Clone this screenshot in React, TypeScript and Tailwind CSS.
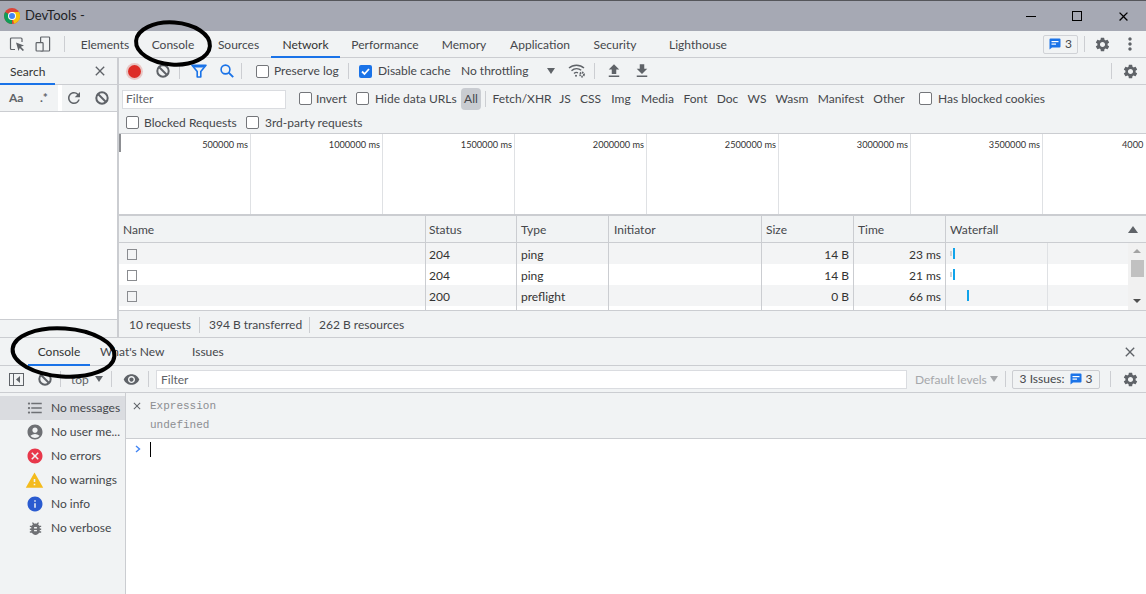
import {
  MdSettings,
  MdMoreVert,
  MdVisibility,
  MdAccountCircle,
  MdCancel,
  MdWarning,
  MdInfo,
  MdBugReport,
  MdFormatListBulleted,
  MdClose,
  MdRefresh,
  MdFileUpload,
  MdFileDownload,
} from "react-icons/md";

const MAIN_TABS = [
  { label: "Elements", w: "w-[70px]" },
  { label: "Console", w: "w-[66px]" },
  { label: "Sources", w: "w-[65px]" },
  { label: "Network", w: "w-[69px]" },
  { label: "Performance", w: "w-[90px]" },
  { label: "Memory", w: "w-[68px]" },
  { label: "Application", w: "w-[84px]" },
  { label: "Security", w: "w-[66px]" },
  { label: "Lighthouse", w: "w-[100px]" },
];

const TYPE_FILTERS = [
  { label: "Fetch/XHR", w: "w-[66px]" },
  { label: "JS", w: "w-[20px]" },
  { label: "CSS", w: "w-[31px]" },
  { label: "Img", w: "w-[30px]" },
  { label: "Media", w: "w-[43px]" },
  { label: "Font", w: "w-[33px]" },
  { label: "Doc", w: "w-[31px]" },
  { label: "WS", w: "w-[28px]" },
  { label: "Wasm", w: "w-[42px]" },
  { label: "Manifest", w: "w-[56px]" },
  { label: "Other", w: "w-[40px]" },
];

const TICKS = ["500000 ms", "1000000 ms", "1500000 ms", "2000000 ms", "2500000 ms", "3000000 ms", "3500000 ms"];

const ROWS = [
  { status: "204", type: "ping", size: "14 B", time: "23 ms", bar: "pl-[4px]", gray: true, wait: true },
  { status: "204", type: "ping", size: "14 B", time: "21 ms", bar: "pl-[4px]", gray: false, wait: true },
  { status: "200", type: "preflight", size: "0 B", time: "66 ms", bar: "pl-[21px]", gray: true, wait: false },
];

const LEVELS = [
  { label: "No messages", icon: <MdFormatListBulleted className="text-[#6e7074]" size={18} />, active: true },
  { label: "No user me...", icon: <MdAccountCircle className="text-[#6e7074]" size={18} /> },
  { label: "No errors", icon: <MdCancel className="text-[#e8374a]" size={18} /> },
  { label: "No warnings", icon: <MdWarning className="text-[#f4bb1c]" size={19} /> },
  { label: "No info", icon: <MdInfo className="text-[#2a5bd0]" size={18} /> },
  { label: "No verbose", icon: <MdBugReport className="text-[#6e7074]" size={17} /> },
];

function ChromeLogo() {
  return (
    <svg width="16" height="16" viewBox="0 0 16 16">
      <circle cx="8" cy="8" r="8" fill="#db4437" />
      <path d="M8 8 L1.1 4 A8 8 0 0 0 8 16 Z" fill="#0f9d58" />
      <path d="M8 8 V4 H15 A8 8 0 0 1 10 15.8 Z" fill="#f4c20d" />
      <circle cx="8" cy="8" r="4" fill="#fff" />
      <circle cx="8" cy="8" r="3" fill="#4285f4" />
    </svg>
  );
}

function Divider({ className = "" }: { className?: string }) {
  return <div className={`w-px h-[16px] bg-[#ccced2] shrink-0 ${className}`} />;
}

function CheckBox({ checked = false, className = "" }: { checked?: boolean; className?: string }) {
  if (checked) {
    return (
      <div className={`w-[13px] h-[13px] rounded-[2px] bg-[#1a73e8] flex items-center justify-center shrink-0 ${className}`}>
        <svg width="11" height="11" viewBox="0 0 11 11">
          <path d="M2 5.5 L4.5 8 L9 3" fill="none" stroke="#fff" strokeWidth="1.8" />
        </svg>
      </div>
    );
  }
  return <div className={`w-[13px] h-[13px] rounded-[2px] border border-[#74767a] bg-white shrink-0 ${className}`} />;
}

function BlockIcon({ className = "" }: { className?: string }) {
  return (
    <svg className={`shrink-0 ${className}`} width="14" height="14" viewBox="0 0 14 14" fill="none" stroke="#5f6368" strokeWidth="2">
      <circle cx="7" cy="7" r="5.7" />
      <path d="M3 3 L11 11" />
    </svg>
  );
}

function IssueIcon() {
  return (
    <svg width="12" height="12" viewBox="0 0 12 12">
      <path d="M1.5 0.5 H10.5 A1 1 0 0 1 11.5 1.5 V8.5 A1 1 0 0 1 10.5 9.5 H3 L0.5 11.5 V1.5 A1 1 0 0 1 1.5 0.5 Z" fill="#1a73e8" />
      <rect x="2.5" y="3" width="7" height="1.2" fill="#fff" />
      <rect x="2.5" y="5.5" width="4.5" height="1.2" fill="#fff" />
    </svg>
  );
}

function InspectIcon() {
  return (
    <svg width="16" height="16" viewBox="0 0 16 16" fill="none">
      <path d="M6 13.5 H2.5 A1 1 0 0 1 1.5 12.5 V3 A1 1 0 0 1 2.5 2 H12 A1 1 0 0 1 13 3 V6" stroke="#5f6368" strokeWidth="1.2" />
      <path d="M7 6.5 L15 9.5 L11.8 10.8 L15 14 L13.8 15 L10.8 12 L9.5 15 Z" fill="#5f6368" />
    </svg>
  );
}

function DeviceIcon() {
  return (
    <svg width="16" height="16" viewBox="0 0 16 16" fill="none" stroke="#5f6368" strokeWidth="1.2">
      <rect x="5.6" y="1" width="9" height="14" rx="0.8" />
      <rect x="1.1" y="6.6" width="7" height="8.4" rx="0.8" fill="#f1f3f4" />
    </svg>
  );
}

function FunnelIcon() {
  return (
    <svg width="16" height="14" viewBox="0 0 16 14" fill="none">
      <path d="M1 1.2 H15 L9.8 7.5 V13 H6.2 V7.5 Z" stroke="#1a73e8" strokeWidth="1.6" strokeLinejoin="round" />
      <path d="M1.5 1 H14.5 L12.5 3.5 H3.5 Z" fill="#1a73e8" />
    </svg>
  );
}

function SearchIcon() {
  return (
    <svg width="14" height="14" viewBox="0 0 14 14" fill="none" stroke="#1a73e8" strokeWidth="1.6">
      <circle cx="5.5" cy="5.5" r="4.4" />
      <path d="M8.7 8.7 L13.2 13.2" strokeWidth="1.9" />
    </svg>
  );
}

function WifiGearIcon() {
  return (
    <svg width="18" height="14" viewBox="0 0 18 14" fill="none" stroke="#5f6368" strokeWidth="1.4">
      <path d="M1 4 C5 0.3 12 0.3 16 4" />
      <path d="M3.5 6.8 C6.5 4.2 10.5 4.2 13.2 6.3" />
      <path d="M6 9.5 C7.2 8.4 8.8 8.2 10 8.8" />
      <circle cx="8" cy="11.8" r="1" fill="#5f6368" stroke="none" />
      <circle cx="14" cy="10.5" r="2" strokeWidth="1.8" strokeDasharray="1.4 0.7" />
    </svg>
  );
}

function SidebarToggleIcon() {
  return (
    <svg width="15" height="13" viewBox="0 0 15 13" fill="none">
      <rect x="0.5" y="0.5" width="14" height="12" stroke="#5f6368" />
      <path d="M4.5 0.5 V12.5" stroke="#5f6368" />
      <path d="M11 3 L7 6.5 L11 10 Z" fill="#5f6368" />
    </svg>
  );
}

function Ellipse({ className, w, h, rx, ry }: { className: string; w: number; h: number; rx: number; ry: number }) {
  return (
    <svg className={`absolute pointer-events-none ${className}`} width={w} height={h} viewBox={`0 0 ${w} ${h}`} fill="none">
      <ellipse cx={w / 2} cy={h / 2} rx={rx} ry={ry} stroke="#000" strokeWidth="4" transform={`rotate(4 ${w / 2} ${h / 2})`} />
    </svg>
  );
}

export default function App() {
  return (
    <div
      className="relative w-[1146px] h-[594px] overflow-hidden flex flex-col bg-white text-[#45474b] text-[12px] whitespace-nowrap"
      style={{ fontFamily: 'Lato, "Open Sans", sans-serif' }}
    >
      {/* Title bar */}
      <div className="h-[31px] shrink-0 border-t border-[#55565b] bg-[#a6a9b4] flex items-center pl-[4px] text-[#202124]">
        <ChromeLogo />
        <span className="ml-[5px] text-[13px]">DevTools -</span>
        <div className="ml-auto flex items-center">
          <div className="w-[46px] flex justify-center">
            <div className="w-[10px] h-px bg-black" />
          </div>
          <div className="w-[46px] flex justify-center">
            <div className="w-[10px] h-[10px] border border-black" />
          </div>
          <div className="w-[46px] flex justify-center">
            <MdClose className="text-black" size={15} />
          </div>
        </div>
      </div>

      {/* Main tabs */}
      <div className="h-[27px] shrink-0 bg-[#f1f3f4] border-b border-[#cbcdd1] flex items-stretch">
        <div className="flex items-center gap-[10px] pl-[9px] w-[64px]">
          <InspectIcon />
          <DeviceIcon />
        </div>
        <div className="self-center">
          <Divider />
        </div>
        <div className="w-[5px]" />
        {MAIN_TABS.map((t) => (
          <div
            key={t.label}
            className={`${t.w} flex items-center justify-center ${t.label === "Network" ? "border-b-2 border-[#1a73e8] text-[#333] -mb-px pt-[2px]" : "pt-px"}`}
          >
            {t.label}
          </div>
        ))}
        <div className="ml-auto flex items-center pr-[6px]">
          <div className="w-[35px] h-[19px] border border-[#d0d2d6] rounded-[2px] flex items-center justify-center gap-[4px] text-[12px]">
            <IssueIcon />
            3
          </div>
          <Divider className="ml-[6px]" />
          <MdSettings className="text-[#5f6368] ml-[9px]" size={17} />
          <MdMoreVert className="text-[#5f6368] ml-[9px]" size={20} />
        </div>
      </div>

      {/* Upper area */}
      <div className="h-[280px] shrink-0 flex border-b border-[#cbcdd1]">
        {/* Search sidebar */}
        <div className="w-[119px] shrink-0 border-r-2 border-[#cbcdd1] flex flex-col">
          <div className="h-[27px] shrink-0 bg-[#f1f3f4] border-b border-[#cbcdd1] flex items-stretch">
            <div className="w-[55px] border-b-2 border-[#1a73e8] -mb-px flex items-center pl-[10px] pt-[2px] text-[#333]">Search</div>
            <MdClose className="text-[#5f6368] ml-auto mr-[9px] self-center" size={16} />
          </div>
          <div className="h-[27px] shrink-0 bg-[#f1f3f4] border-b border-[#cbcdd1] flex items-center text-[#5f6368]">
            <span className="ml-[9px] font-bold w-[26px]">Aa</span>
            <span className="font-bold w-[23px] pl-[5px]">.*</span>
            <div className="w-[4px] h-[26px] bg-white" />
            <MdRefresh className="ml-[3px]" size={18} />
            <BlockIcon className="ml-[12px]" />
          </div>
          <div className="flex-1 bg-white" />
          <div className="h-[18px] shrink-0 bg-[#f1f3f4] border-t border-[#cbcdd1]" />
        </div>

        {/* Network panel */}
        <div className="flex-1 min-w-0 flex flex-col">
          <div className="h-[27px] shrink-0 bg-[#f1f3f4] border-b border-[#cbcdd1] flex items-center">
            <div className="ml-[9px] w-[13px] h-[13px] rounded-full bg-[#dd2c26] ring-2 ring-[#e8c6c4]" />
            <BlockIcon className="ml-[15px]" />
            <Divider className="ml-[9px]" />
            <div className="ml-[11px]">
              <FunnelIcon />
            </div>
            <div className="ml-[13px]">
              <SearchIcon />
            </div>
            <Divider className="ml-[7px]" />
            <CheckBox className="ml-[14px]" />
            <span className="ml-[5px] w-[66px]">Preserve log</span>
            <Divider className="ml-[8px]" />
            <CheckBox checked className="ml-[10px]" />
            <span className="ml-[6px] w-[71px]">Disable cache</span>
            <span className="ml-[12px] w-[68px]">No throttling</span>
            <div className="ml-[18px] w-0 h-0 border-x-[4px] border-x-transparent border-t-[6px] border-t-[#5f6368]" />
            <div className="ml-[13px]">
              <WifiGearIcon />
            </div>
            <Divider className="ml-[8px]" />
            <MdFileUpload className="ml-[10px] text-[#5f6368]" size={18} />
            <MdFileDownload className="ml-[10px] text-[#5f6368]" size={18} />
            <Divider className="ml-auto mr-[10px]" />
            <MdSettings className="text-[#5f6368] mr-[7px]" size={17} />
          </div>

          <div className="h-[49px] shrink-0 bg-[#f1f3f4] border-b border-[#cbcdd1] flex flex-col">
            <div className="h-[28px] flex items-center pl-[3px]">
              <div className="w-[164px] h-[19px] bg-white border border-[#dadce0] pl-[3px] flex items-center text-[#5f6368]">Filter</div>
              <CheckBox className="ml-[13px] -mt-[2px]" />
              <span className="ml-[4px] w-[31px] -mt-px">Invert</span>
              <CheckBox className="ml-[9px] -mt-[2px]" />
              <span className="ml-[6px] w-[80px] -mt-px">Hide data URLs</span>
              <div className="ml-[6px] w-[20px] h-[22px] rounded-[4px] bg-[#c9ccd1] flex items-center justify-center">All</div>
              <Divider className="ml-[4px]" />
              <div className="w-[3px]" />
              {TYPE_FILTERS.map((f) => (
                <span key={f.label} className={`${f.w} text-center`}>
                  {f.label}
                </span>
              ))}
              <CheckBox className="ml-[10px] -mt-[2px]" />
              <span className="ml-[6px] -mt-px">Has blocked cookies</span>
            </div>
            <div className="flex-1 flex items-center pl-[7px] pb-px">
              <CheckBox />
              <span className="ml-[5px] w-[93px]">Blocked Requests</span>
              <CheckBox className="ml-[9px]" />
              <span className="ml-[6px]">3rd-party requests</span>
            </div>
          </div>

          {/* Overview */}
          <div className="relative h-[82px] shrink-0 flex overflow-hidden border-b-2 border-[#cbcdd1] bg-white">
            <div className="absolute left-0 top-0 w-[2px] h-[18px] bg-[#8d8f93]" />
            {TICKS.map((t) => (
              <div key={t} className="w-[132px] shrink-0 border-r border-[#dfe1e4] text-right pr-[2px] text-[9.2px] leading-[21px] text-[#333]">
                {t}
              </div>
            ))}
            <div className="pl-[79px] text-[9.2px] leading-[21px] text-[#333]">4000</div>
          </div>

          {/* Table */}
          <div className="flex-1 min-h-0 flex flex-col">
            <div className="h-[27px] shrink-0 bg-[#f1f3f4] border-b border-[#cbcdd1] flex items-center">
              <div className="w-[307px] h-full border-r border-[#cbcdd1] pl-[4px] pt-px flex items-center">Name</div>
              <div className="w-[91px] h-full border-r border-[#cbcdd1] pl-[3px] pt-px flex items-center">Status</div>
              <div className="w-[92px] h-full border-r border-[#cbcdd1] pl-[4px] pt-px flex items-center">Type</div>
              <div className="w-[153px] h-full border-r border-[#cbcdd1] pl-[5px] pt-px flex items-center">Initiator</div>
              <div className="w-[92px] h-full border-r border-[#cbcdd1] pl-[4px] pt-px flex items-center">Size</div>
              <div className="w-[92px] h-full border-r border-[#cbcdd1] pl-[4px] pt-px flex items-center">Time</div>
              <div className="flex-1 pl-[4px] pt-px flex items-center justify-between pr-[8px]">
                Waterfall
                <div className="w-0 h-0 border-x-[5px] border-x-transparent border-b-[7px] border-b-[#5f6368]" />
              </div>
            </div>
            <div className="flex-1 min-h-0 flex">
              <div className="w-[1009px] shrink-0 flex flex-col">
                {ROWS.map((r, i) => (
                  <div key={i} className={`h-[21px] shrink-0 flex items-center text-[#333] ${r.gray ? "bg-[#f3f4f5]" : "bg-white"}`}>
                    <div className="w-[307px] h-full border-r border-[#cbcdd1] pl-[8px] pt-[2px] flex items-center">
                      <div className="w-[10px] h-[11px] border border-[#8a8c90]" />
                    </div>
                    <div className="w-[91px] h-full border-r border-[#cbcdd1] pl-[3px] pt-[2px] flex items-center">{r.status}</div>
                    <div className="w-[92px] h-full border-r border-[#cbcdd1] pl-[4px] pt-[2px] flex items-center">{r.type}</div>
                    <div className="w-[153px] h-full border-r border-[#cbcdd1]" />
                    <div className="w-[92px] h-full border-r border-[#cbcdd1] pr-[4px] pt-[2px] flex items-center justify-end">{r.size}</div>
                    <div className="w-[92px] h-full border-r border-[#cbcdd1] pr-[4px] pt-[2px] flex items-center justify-end">{r.time}</div>
                    <div className={`w-[102px] h-full border-r border-[#dfe1e4] flex items-center ${r.bar}`}>
                      {r.wait && <div className="w-[2px] h-[5px] mr-px bg-[#d0d2d6]" />}
                      <div className="w-[2px] h-[11px] bg-[#10a3ea]" />
                    </div>
                  </div>
                ))}
                <div className="flex-1 flex">
                  <div className="w-[307px] border-r border-[#cbcdd1]" />
                  <div className="w-[91px] border-r border-[#cbcdd1]" />
                  <div className="w-[92px] border-r border-[#cbcdd1]" />
                  <div className="w-[153px] border-r border-[#cbcdd1]" />
                  <div className="w-[92px] border-r border-[#cbcdd1]" />
                  <div className="w-[92px] border-r border-[#cbcdd1]" />
                  <div className="w-[102px] border-r border-[#dfe1e4]" />
                </div>
              </div>
              <div className="flex-1 bg-[#f1f1f1] flex flex-col items-center">
                <div className="mt-[6px] w-0 h-0 border-x-[4px] border-x-transparent border-b-[4px] border-b-[#a3a3a3]" />
                <div className="mt-[7px] w-[13px] h-[17px] bg-[#c1c1c1]" />
                <div className="mt-auto mb-[7px] w-0 h-0 border-x-[4px] border-x-transparent border-t-[4px] border-t-[#505050]" />
              </div>
            </div>
          </div>

          {/* Status bar */}
          <div className="h-[27px] shrink-0 bg-[#f1f3f4] border-t border-[#cbcdd1] flex items-center pl-[10px] pt-px">
            <span className="w-[61px]">10 requests</span>
            <Divider className="ml-[9px]" />
            <span className="ml-[9px] w-[91px]">394 B transferred</span>
            <Divider className="ml-[9px]" />
            <span className="ml-[9px]">262 B resources</span>
          </div>
        </div>
      </div>

      {/* Drawer tabs */}
      <div className="h-[28px] shrink-0 bg-[#f1f3f4] border-b border-[#cbcdd1] flex items-stretch">
        <div className="ml-[28px] w-[62px] border-b-2 border-[#1a73e8] -mb-px flex items-center justify-center pt-px text-[#333]">Console</div>
        <div className="ml-[10px] flex items-center pt-px w-[63px]">What's New</div>
        <div className="ml-[29px] flex items-center pt-px">Issues</div>
        <MdClose className="ml-auto mr-[8px] self-center text-[#5f6368]" size={16} />
      </div>

      {/* Console toolbar */}
      <div className="h-[27px] shrink-0 bg-[#f1f3f4] border-b border-[#cbcdd1] flex items-center">
        <div className="ml-[9px]">
          <SidebarToggleIcon />
        </div>
        <BlockIcon className="ml-[14px]" />
        <Divider className="ml-[8px]" />
        <span className="ml-[10px] w-[18px] pt-px text-[#5f6368]">top</span>
        <div className="ml-[6px] w-0 h-0 border-x-[4px] border-x-transparent border-t-[6px] border-t-[#5f6368]" />
        <Divider className="ml-[8px]" />
        <MdVisibility className="ml-[11px] text-[#5f6368]" size={17} />
        <Divider className="ml-[8px]" />
        <div className="ml-[7px] w-[751px] h-[19px] bg-white border border-[#dadce0] pl-[4px] pt-px flex items-center text-[#5f6368]">Filter</div>
        <span className="ml-[8px] w-[71px] pt-px text-[#a6a8ab]">Default levels</span>
        <div className="ml-[4px] w-0 h-0 border-x-[4px] border-x-transparent border-t-[6px] border-t-[#a6a8ab]" />
        <Divider className="ml-[7px]" />
        <div className="ml-[6px] w-[88px] h-[19px] border border-[#cbcdd1] rounded-[2px] flex items-center justify-center gap-[6px]">
          3 Issues:
          <span className="flex items-center gap-[3px]">
            <IssueIcon />3
          </span>
        </div>
        <Divider className="ml-[10px]" />
        <MdSettings className="ml-[11px] text-[#5f6368]" size={17} />
      </div>

      {/* Console body */}
      <div className="flex-1 min-h-0 flex">
        <div className="w-[126px] shrink-0 bg-[#f1f3f4] border-r border-[#cbcdd1] pt-[3px]">
          {LEVELS.map((l) => (
            <div key={l.label} className={`h-[24px] flex items-center ${l.active ? "bg-[#dadce0]" : ""}`}>
              <div className="w-[51px] pr-[7px] flex justify-end">{l.icon}</div>
              <span>{l.label}</span>
            </div>
          ))}
        </div>
        <div className="flex-1 flex flex-col bg-white" style={{ fontFamily: '"Liberation Mono", monospace' }}>
          <div className="h-[46px] shrink-0 bg-[#f1f3f4] border-b border-[#cbcdd1] text-[11px] text-[#8c8e92] flex">
            <div className="w-[24px] pl-[5px] pt-[7px]">
              <MdClose className="text-[#5f6368]" size={12} />
            </div>
            <div className="pt-[4px] leading-[19px]">
              <div>Expression</div>
              <div>undefined</div>
            </div>
          </div>
          <div className="flex items-center h-[20px] pt-[1px]">
            <svg className="ml-[9px] -mt-px" width="6" height="8" viewBox="0 0 6 8" fill="none">
              <path d="M1 1 L4.5 4 L1 7" stroke="#4285f4" strokeWidth="1.4" />
            </svg>
            <div className="ml-[9px] w-px h-[15px] bg-black" />
          </div>
        </div>
      </div>

      {/* Hand drawn marks */}
      <Ellipse className="left-[133px] top-[18px]" w={80} h={51} rx={37} ry={21} />
      <Ellipse className="left-[9px] top-[324px]" w={109} h={57} rx={51} ry={24} />
    </div>
  );
}
